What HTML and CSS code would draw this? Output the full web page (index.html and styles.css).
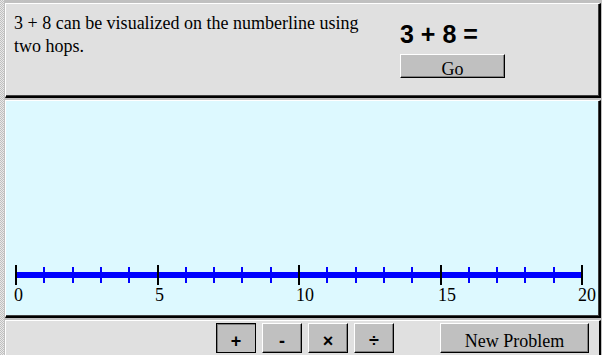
FILE: index.html
```html
<!DOCTYPE html>
<html lang="en">
<head>
    <meta charset="UTF-8">
    <meta name="viewport" content="width=device-width, initial-scale=1.0">
    <title>Numberline Hops</title>
    <link rel="stylesheet" href="styles.css">
</head>
<body>

<div class="app">
    <div class="panel top-panel">
        <p class="prompt">3 + 8 can be visualized on the numberline using two hops.</p>
        <div class="problem">
            <div class="equation">3 + 8 =</div>
            <button class="btn go-btn">Go</button>
        </div>
    </div>

    <div class="panel line-panel">
        <svg class="numberline" width="593" height="215" viewBox="0 0 593 215">
            <rect class="line" x="9" y="171" width="568" height="6"/>
            <!-- small ticks -->
            <g class="minor">
                <rect x="37" y="166" width="2" height="16"/>
                <rect x="66" y="166" width="2" height="16"/>
                <rect x="94" y="166" width="2" height="16"/>
                <rect x="122" y="166" width="2" height="16"/>
                <rect x="179" y="166" width="2" height="16"/>
                <rect x="207" y="166" width="2" height="16"/>
                <rect x="235" y="166" width="2" height="16"/>
                <rect x="264" y="166" width="2" height="16"/>
                <rect x="320" y="166" width="2" height="16"/>
                <rect x="349" y="166" width="2" height="16"/>
                <rect x="377" y="166" width="2" height="16"/>
                <rect x="405" y="166" width="2" height="16"/>
                <rect x="462" y="166" width="2" height="16"/>
                <rect x="490" y="166" width="2" height="16"/>
                <rect x="518" y="166" width="2" height="16"/>
                <rect x="547" y="166" width="2" height="16"/>
            </g>
            <!-- every fifth tick -->
            <g class="major">
                <rect x="9" y="164" width="2" height="20"/>
                <rect x="151" y="164" width="2" height="20"/>
                <rect x="292" y="164" width="2" height="20"/>
                <rect x="434" y="164" width="2" height="20"/>
                <rect x="575" y="164" width="2" height="20"/>
            </g>
            <g class="labels">
                <text x="8" y="200">0</text>
                <text x="149" y="200">5</text>
                <text x="290" y="200">10</text>
                <text x="432" y="200">15</text>
                <text x="572" y="200">20</text>
            </g>
        </svg>
    </div>

    <div class="panel bottom-panel">
        <div class="ops">
            <button class="btn op-btn pressed">+</button>
            <button class="btn op-btn">-</button>
            <button class="btn op-btn">&times;</button>
            <button class="btn op-btn">&divide;</button>
        </div>
        <button class="btn new-btn">New Problem</button>
    </div>
</div>

</body>
</html>
```

FILE: styles.css
```css
body {
    margin: 0;
    width: 602px;
    height: 355px;
    overflow: hidden;
    /* dotted strip on the left edge */
    background-color: #d0d0d0;
    background-image: conic-gradient(#e8e8e8 25%, #c0c0c0 0 50%, #e8e8e8 0 75%, #c0c0c0 0);
    background-size: 2px 2px;
    font-family: "Liberation Serif", "Times New Roman", serif;
}
.app {
    margin-left: 4px;
    width: 598px;
    height: 355px;
    box-sizing: border-box;
    padding: 3px 1px 0 1px;
    background: #c0c0c0;
    display: flex;
    flex-direction: column;
    gap: 2px;
}
.panel {
    box-sizing: border-box;
    width: 596px;
    border-top: 1px solid #fff;
    border-left: 1px solid #fff;
    border-right: 2px solid #000;
    border-bottom: 2px solid #000;
    box-shadow: inset -1px -1px 0 #404040;
}
.top-panel {
    height: 95px;
    background: #e0e0e0;
    display: flex;
}
.prompt {
    margin: 0;
    width: 360px;
    padding: 8px 0 0 8px;
    font-size: 18px;
    line-height: 23px;
    color: #000;
}
.problem {
    margin-left: 26px;
    padding-top: 16px;
    display: flex;
    flex-direction: column;
    align-items: flex-start;
}
.equation {
    font-family: "Liberation Sans", Arial, sans-serif;
    font-weight: bold;
    font-size: 25px;
    line-height: 29px;
    color: #000;
}
.btn {
    box-sizing: border-box;
    margin: 0;
    background: #c0c0c0;
    border: 1px solid;
    border-color: #fff #000 #000 #fff;
    box-shadow: inset -1px -1px 0 #808080;
    color: #000;
    font-family: "Liberation Serif", "Times New Roman", serif;
    font-size: 18px;
    cursor: pointer;
}
.go-btn {
    margin-top: 5px;
    width: 105px;
    height: 24px;
    padding: 6px 0 0;
    line-height: 16px;
}
.line-panel {
    height: 218px;
    background: #ddf9ff;
}
.numberline {
    display: block;
}
.line {
    fill: #0000ff;
}
.minor rect {
    fill: #0000ff;
}
.major rect {
    fill: #000;
}
.labels text {
    font-family: "Liberation Serif", "Times New Roman", serif;
    font-size: 18px;
    fill: #000;
}
.bottom-panel {
    flex: 1;
    background: #e0e0e0;
    border-bottom: none;
    box-shadow: none;
    padding: 2px 0 0 210px;
    display: flex;
    align-items: flex-start;
}
.ops {
    display: flex;
    gap: 6px;
}
.op-btn {
    width: 40px;
    height: 30px;
    padding: 6px 0 0;
    line-height: 20px;
    font-family: "Liberation Sans", Arial, sans-serif;
    font-weight: bold;
    font-size: 18px;
}
.op-btn.pressed {
    border-color: #000;
    box-shadow: inset 1px 1px 0 #808080;
}
.new-btn {
    margin-left: 46px;
    width: 149px;
    height: 30px;
    padding: 5px 0 0;
    line-height: 20px;
}
```
